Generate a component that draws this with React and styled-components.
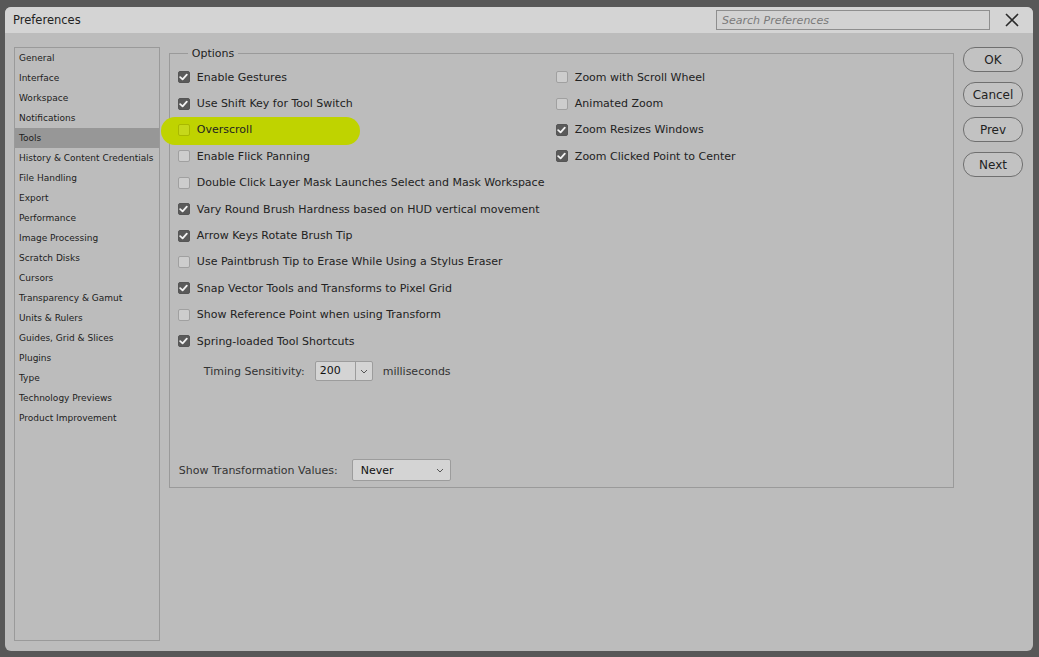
import React from "react";
import styled, { createGlobalStyle } from "styled-components";

const GlobalStyle = createGlobalStyle`
  html, body {
    margin: 0;
    padding: 0;
    background: #585858;
  }
  body {
    font-family: "DejaVu Sans", "Liberation Sans", sans-serif;
    color: #1e1e1e;
  }
`;

const categories = [
  "General",
  "Interface",
  "Workspace",
  "Notifications",
  "Tools",
  "History & Content Credentials",
  "File Handling",
  "Export",
  "Performance",
  "Image Processing",
  "Scratch Disks",
  "Cursors",
  "Transparency & Gamut",
  "Units & Rulers",
  "Guides, Grid & Slices",
  "Plugins",
  "Type",
  "Technology Previews",
  "Product Improvement",
];

const leftOptions = [
  { label: "Enable Gestures", checked: true },
  { label: "Use Shift Key for Tool Switch", checked: true },
  { label: "Overscroll", checked: false, marked: true },
  { label: "Enable Flick Panning", checked: false },
  { label: "Double Click Layer Mask Launches Select and Mask Workspace", checked: false },
  { label: "Vary Round Brush Hardness based on HUD vertical movement", checked: true },
  { label: "Arrow Keys Rotate Brush Tip", checked: true },
  { label: "Use Paintbrush Tip to Erase While Using a Stylus Eraser", checked: false },
  { label: "Snap Vector Tools and Transforms to Pixel Grid", checked: true },
  { label: "Show Reference Point when using Transform", checked: false },
  { label: "Spring-loaded Tool Shortcuts", checked: true },
];

const rightOptions = [
  { label: "Zoom with Scroll Wheel", checked: false },
  { label: "Animated Zoom", checked: false },
  { label: "Zoom Resizes Windows", checked: true },
  { label: "Zoom Clicked Point to Center", checked: true },
];

const CheckMark = () => (
  <svg width="9" height="8" viewBox="0 0 9 8">
    <path d="M1.2 4.2 L3.6 6.4 L7.8 1.6" fill="none" stroke="#f2f2f2" strokeWidth="1.8" strokeLinecap="round" strokeLinejoin="round" />
  </svg>
);

const Chevron = () => (
  <svg width="8" height="5" viewBox="0 0 8 5">
    <path d="M1 1 L4 4 L7 1" fill="none" stroke="#555" strokeWidth="1" />
  </svg>
);

const Option = ({ label, checked, marked }) => (
  <Row>
    {marked && <Marker />}
    <Box $checked={checked} $marked={marked}>
      {checked && <CheckMark />}
    </Box>
    <Label>{label}</Label>
  </Row>
);

const App = () => {
  return (
    <>
      <GlobalStyle />
      <Screen>
        <Window>
          <TitleBar>
            <Title>Preferences</Title>
            <Search placeholder="Search Preferences" />
            <Close>
              <svg width="14" height="14" viewBox="0 0 14 14">
                <path d="M1 1 L13 13 M13 1 L1 13" stroke="#2a2a2a" strokeWidth="1.6" />
              </svg>
            </Close>
          </TitleBar>
          <Body>
            <Sidebar>
              {categories.map((c) => (
                <Category key={c} $active={c === "Tools"}>
                  {c}
                </Category>
              ))}
            </Sidebar>
            <Main>
              <Fieldset>
                <Legend>Options</Legend>
                <Columns>
                  <Column>
                    {leftOptions.map((o) => (
                      <Option key={o.label} {...o} />
                    ))}
                    <TimingRow>
                      <FieldLabel>Timing Sensitivity:</FieldLabel>
                      <Combo>
                        <ComboValue>200</ComboValue>
                        <ComboButton>
                          <Chevron />
                        </ComboButton>
                      </Combo>
                      <FieldLabel>milliseconds</FieldLabel>
                    </TimingRow>
                  </Column>
                  <Column>
                    {rightOptions.map((o) => (
                      <Option key={o.label} {...o} />
                    ))}
                  </Column>
                </Columns>
                <Spacer />
                <TransformRow>
                  <FieldLabel>Show Transformation Values:</FieldLabel>
                  <Dropdown>
                    <span>Never</span>
                    <Chevron />
                  </Dropdown>
                </TransformRow>
              </Fieldset>
            </Main>
            <Buttons>
              <Button>OK</Button>
              <Button>Cancel</Button>
              <Button>Prev</Button>
              <Button>Next</Button>
            </Buttons>
          </Body>
        </Window>
      </Screen>
    </>
  );
};

export default App;

const Screen = styled.div`
  width: 1039px;
  height: 657px;
  padding: 7px 6px 6px 5px;
  box-sizing: border-box;
  background: #585858;
`;

const Window = styled.div`
  width: 100%;
  height: 100%;
  background: #bcbcbc;
  border-radius: 6px;
  overflow: hidden;
  display: flex;
  flex-direction: column;
`;

const TitleBar = styled.div`
  height: 26px;
  background: #d4d4d4;
  display: flex;
  align-items: center;
  padding: 0 0 0 8px;
  flex-shrink: 0;
`;

const Title = styled.div`
  font-size: 11.5px;
  color: #222;
  flex: 1;
`;

const Search = styled.input`
  width: 274px;
  height: 20px;
  box-sizing: border-box;
  border: 1px solid #8e8e8e;
  background: #d2d2d2;
  font-family: "DejaVu Sans", sans-serif;
  font-size: 11px;
  font-style: italic;
  padding: 0 5px;
  outline: none;
  &::placeholder {
    color: #7a7a7a;
  }
`;

const Close = styled.div`
  width: 43px;
  display: flex;
  justify-content: center;
  align-items: center;
`;

const Body = styled.div`
  flex: 1;
  display: flex;
  padding: 14px 10px 10px 9px;
  gap: 9px;
`;

const Sidebar = styled.div`
  width: 146px;
  border: 1px solid #9a9a9a;
  box-sizing: border-box;
  display: flex;
  flex-direction: column;
`;

const Category = styled.div`
  height: 20px;
  line-height: 20px;
  padding-left: 4px;
  font-size: 9px;
  white-space: nowrap;
  color: #1c1c1c;
  background: ${(p) => (p.$active ? "#979797" : "transparent")};
`;

const Main = styled.div`
  width: 786px;
`;

const Fieldset = styled.fieldset`
  margin: 0;
  height: 441px;
  box-sizing: border-box;
  border: 1px solid #9a9a9a;
  padding: 4px 8px 6px 8px;
  display: flex;
  flex-direction: column;
`;

const Legend = styled.legend`
  font-size: 11px;
  color: #222;
  padding: 0 4px;
  margin-left: 10px;
`;

const Columns = styled.div`
  display: flex;
`;

const Column = styled.div`
  width: 378px;
  display: flex;
  flex-direction: column;
`;

const Row = styled.div`
  position: relative;
  height: 26.4px;
  display: flex;
  align-items: center;
  gap: 7px;
`;

const Marker = styled.div`
  position: absolute;
  left: -17px;
  top: 0;
  width: 199px;
  height: 28px;
  border-radius: 14px;
  background: #bfd300;
`;

const Box = styled.div`
  position: relative;
  flex-shrink: 0;
  width: 12px;
  height: 12px;
  box-sizing: border-box;
  border-radius: 2px;
  display: flex;
  align-items: center;
  justify-content: center;
  border: 1px solid ${(p) => (p.$checked ? "#555" : p.$marked ? "#a9b800" : "#a0a0a0")};
  background: ${(p) => (p.$checked ? "#5a5a5a" : p.$marked ? "#c6d81a" : "#cdcdcd")};
`;

const Label = styled.span`
  position: relative;
  font-size: 11px;
  color: #222;
  white-space: nowrap;
`;

const TimingRow = styled.div`
  display: flex;
  align-items: center;
  gap: 10px;
  padding-left: 26px;
  margin-top: 7px;
`;

const FieldLabel = styled.span`
  font-size: 11px;
  color: #333;
  white-space: nowrap;
`;

const Combo = styled.div`
  width: 58px;
  height: 20px;
  box-sizing: border-box;
  border: 1px solid #9c9c9c;
  border-radius: 2px;
  background: #d4d4d4;
  display: flex;
`;

const ComboValue = styled.div`
  flex: 1;
  font-size: 11px;
  padding-left: 4px;
  line-height: 18px;
  color: #111;
`;

const ComboButton = styled.div`
  width: 16px;
  border-left: 1px solid #9c9c9c;
  display: flex;
  align-items: center;
  justify-content: center;
`;

const Spacer = styled.div`
  flex: 1;
`;

const TransformRow = styled.div`
  display: flex;
  align-items: center;
  gap: 14px;
  padding-left: 1px;
`;

const Dropdown = styled.div`
  width: 99px;
  height: 22px;
  box-sizing: border-box;
  border: 1px solid #9c9c9c;
  border-radius: 2px;
  background: #d4d4d4;
  display: flex;
  align-items: center;
  justify-content: space-between;
  padding: 0 6px 0 8px;
  font-size: 11px;
  color: #111;
`;

const Buttons = styled.div`
  display: flex;
  flex-direction: column;
  gap: 10px;
`;

const Button = styled.button`
  width: 60px;
  height: 25px;
  border: 1px solid #6f6f6f;
  border-radius: 12px;
  background: #c2c2c2;
  font-family: "DejaVu Sans", sans-serif;
  font-size: 12px;
  color: #222;
  padding: 0;
`;
